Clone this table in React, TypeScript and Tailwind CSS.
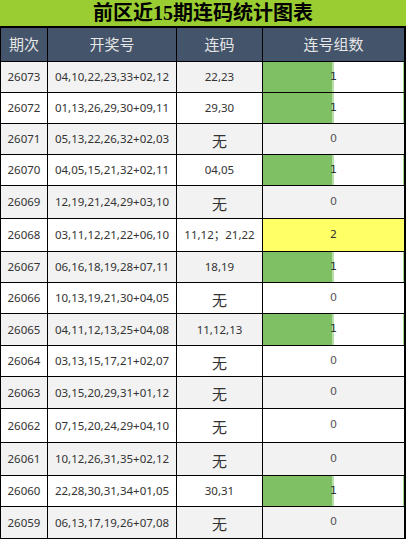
import React from "react";

type Row = { id: string; nums: string; lian: string; count: number; h: number };

const rows: Row[] = [
  { id: "26073", nums: "04,10,22,23,33+02,12", lian: "22,23", count: 1, h: 30 },
  { id: "26072", nums: "01,13,26,29,30+09,11", lian: "29,30", count: 1, h: 30 },
  { id: "26071", nums: "05,13,22,26,32+02,03", lian: "无", count: 0, h: 30 },
  { id: "26070", nums: "04,05,15,21,32+02,11", lian: "04,05", count: 1, h: 30 },
  { id: "26069", nums: "12,19,21,24,29+03,10", lian: "无", count: 0, h: 32 },
  { id: "26068", nums: "03,11,12,21,22+06,10", lian: "11,12；21,22", count: 2, h: 32 },
  { id: "26067", nums: "06,16,18,19,28+07,11", lian: "18,19", count: 1, h: 30 },
  { id: "26066", nums: "10,13,19,21,30+04,05", lian: "无", count: 0, h: 30 },
  { id: "26065", nums: "04,11,12,13,25+04,08", lian: "11,12,13", count: 1, h: 31 },
  { id: "26064", nums: "03,13,15,17,21+02,07", lian: "无", count: 0, h: 30 },
  { id: "26063", nums: "03,15,20,29,31+01,12", lian: "无", count: 0, h: 31 },
  { id: "26062", nums: "07,15,20,24,29+04,10", lian: "无", count: 0, h: 33 },
  { id: "26061", nums: "10,12,26,31,35+02,12", lian: "无", count: 0, h: 32 },
  { id: "26060", nums: "22,28,30,31,34+01,05", lian: "30,31", count: 1, h: 30 },
  { id: "26059", nums: "06,13,17,19,26+07,08", lian: "无", count: 0, h: 31 },
];

const cell =
  "flex items-center justify-center text-[#333] font-['Noto_Sans','Noto_Sans_CJK_SC',sans-serif]";

function ValueCell({ count, bg, h }: { count: number; bg: string; h: number }) {
  const tone =
    count === 2 ? "bg-[#ffff66] text-[#333]" : count === 1 ? "bg-white text-[#333]" : `${bg} text-[#555]`;
  return (
    <div
      className={`relative flex items-center justify-center text-[11px] font-['DejaVu_Sans',sans-serif] ${tone}`}
      style={{ height: h }}
    >
      {count === 1 && (
        <>
          <div className="absolute inset-y-0 left-0 w-[71px] bg-[#7fc064]">
            <div className="absolute inset-y-0 right-0 w-[2px] bg-[#b8dfa8]" />
          </div>
          <div className="absolute inset-y-0 right-0 w-px bg-[#9fd38a]" />
        </>
      )}
      <span className="relative">{count}</span>
    </div>
  );
}

export default function App() {
  return (
    <div className="w-[406px] bg-black">
      <div className="h-[26px] bg-[#9acd32] flex items-center justify-center text-[20px] font-bold text-black leading-none font-['Liberation_Serif','Noto_Sans_CJK_SC',serif]">
        前区近15期连码统计图表
      </div>
      <div className="h-[2px]" />
      <div className="grid grid-cols-[46px_128px_85px_141px] gap-px pl-px pr-[2px] pb-px">
        {["期次", "开奖号", "连码", "连号组数"].map((t) => (
          <div
            key={t}
            className="h-[33px] bg-[#44546a] text-[#e6e6e6] text-[15px] flex items-center justify-center font-['Noto_Sans_CJK_SC',sans-serif]"
          >
            {t}
          </div>
        ))}
        {rows.map((r, i) => {
          const bg = i % 2 === 0 ? "bg-[#f2f2f2]" : "bg-white";
          return (
            <React.Fragment key={r.id}>
              <div className={`${bg} ${cell} text-[11.5px]`} style={{ height: r.h }}>
                {r.id}
              </div>
              <div className={`${bg} ${cell} text-[11.5px]`} style={{ height: r.h }}>
                {r.nums}
              </div>
              <div
                className={`${bg} ${cell} ${r.lian === "无" ? "text-[15px] pt-[4px]" : "text-[11.5px]"}`}
                style={{ height: r.h }}
              >
                {r.lian}
              </div>
              <ValueCell count={r.count} bg={bg} h={r.h} />
            </React.Fragment>
          );
        })}
      </div>
    </div>
  );
}
